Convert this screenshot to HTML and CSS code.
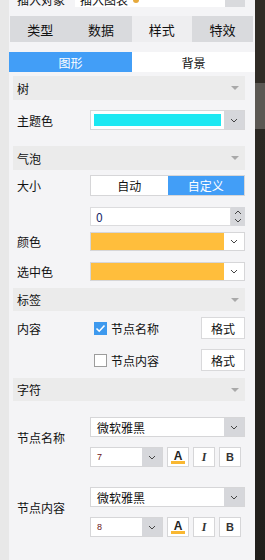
FILE: index.html
```html
<html>
<head>
  <meta http-equiv="Content-Type" content="text/html; charset=UTF-8"/>
  <title>样式</title>
  <link rel="stylesheet" href="styles.css">
</head>
<body>
<div class="page">
<div class="panel">

  <div class="top">
    <div class="top-row">
      <span class="top-label">插入对象</span>
      <div class="top-input"><span>插入图表</span><span class="top-icon"></span></div>
      <div class="top-btn"></div>
    </div>
  </div>

  <div class="tabs">
    <div class="tab">类型</div>
    <div class="tab">数据</div>
    <div class="tab active">样式</div>
    <div class="tab">特效</div>
  </div>

  <div class="subtabs">
    <div class="subtab on">图形</div>
    <div class="subtab">背景</div>
  </div>

  <div class="head h-tree">树<svg class="tri" width="8" height="5" viewBox="0 0 8 5"><path d="M0 0H8L4 4Z" fill="#a9a9a9"/></svg></div>
  <div class="row r-theme">
    <div class="label">主题色</div>
    <div class="pick">
      <div class="pick-box"><div class="swatch cyan"></div></div>
      <div class="drop gray"><svg class="chev" width="8" height="5" viewBox="0 0 8 5"><path d="M1 1L4 4L7 1" fill="none" stroke="#444"/></svg></div>
    </div>
  </div>

  <div class="head h-bubble">气泡<svg class="tri" width="8" height="5" viewBox="0 0 8 5"><path d="M0 0H8L4 4Z" fill="#a9a9a9"/></svg></div>
  <div class="row r-size">
    <div class="label">大小</div>
    <div class="seg">
      <div class="seg-item">自动</div>
      <div class="seg-item on">自定义</div>
    </div>
  </div>
  <div class="row r-num">
    <div class="label"></div>
    <div class="num">
      <div class="num-val">0</div>
      <div class="spin">
        <svg width="8" height="5" viewBox="0 0 8 5"><path d="M1 4L4 1L7 4" fill="none" stroke="#444"/></svg>
        <svg width="8" height="5" viewBox="0 0 8 5"><path d="M1 1L4 4L7 1" fill="none" stroke="#444"/></svg>
      </div>
    </div>
  </div>
  <div class="row r-color">
    <div class="label">颜色</div>
    <div class="pick">
      <div class="fill orange"></div>
      <div class="drop"><svg class="chev" width="8" height="5" viewBox="0 0 8 5"><path d="M1 1L4 4L7 1" fill="none" stroke="#444"/></svg></div>
    </div>
  </div>
  <div class="row r-sel">
    <div class="label">选中色</div>
    <div class="pick">
      <div class="fill orange"></div>
      <div class="drop"><svg class="chev" width="8" height="5" viewBox="0 0 8 5"><path d="M1 1L4 4L7 1" fill="none" stroke="#444"/></svg></div>
    </div>
  </div>

  <div class="head h-label">标签<svg class="tri" width="8" height="5" viewBox="0 0 8 5"><path d="M0 0H8L4 4Z" fill="#a9a9a9"/></svg></div>
  <div class="row r-c1">
    <div class="label">内容</div>
    <div class="check-line">
      <span class="box checked"><svg width="13" height="13" viewBox="0 0 13 13"><path d="M2.5 6.5L5.2 9.2L10.5 3.5" fill="none" stroke="#fff" stroke-width="1.6"/></svg></span>
      <span class="check-text">节点名称</span>
      <div class="btn">格式</div>
    </div>
  </div>
  <div class="row r-c2">
    <div class="label"></div>
    <div class="check-line">
      <span class="box"></span>
      <span class="check-text">节点内容</span>
      <div class="btn">格式</div>
    </div>
  </div>

  <div class="head h-font">字符<svg class="tri" width="8" height="5" viewBox="0 0 8 5"><path d="M0 0H8L4 4Z" fill="#a9a9a9"/></svg></div>

  <div class="font-group g1">
    <div class="label">节点名称</div>
    <div class="font-ctrl">
      <div class="select">
        <div class="select-val">微软雅黑</div>
        <div class="drop gray"><svg class="chev" width="8" height="5" viewBox="0 0 8 5"><path d="M1 1L4 4L7 1" fill="none" stroke="#444"/></svg></div>
      </div>
      <div class="tools">
        <div class="size">
          <div class="size-val">7</div>
          <div class="drop gray"><svg class="chev" width="8" height="5" viewBox="0 0 8 5"><path d="M1 1L4 4L7 1" fill="none" stroke="#444"/></svg></div>
        </div>
        <div class="tool"><span class="a">A</span><span class="bar"></span></div>
        <div class="tool"><span class="i">I</span></div>
        <div class="tool"><span class="b">B</span></div>
      </div>
    </div>
  </div>

  <div class="font-group g2">
    <div class="label">节点内容</div>
    <div class="font-ctrl">
      <div class="select">
        <div class="select-val">微软雅黑</div>
        <div class="drop gray"><svg class="chev" width="8" height="5" viewBox="0 0 8 5"><path d="M1 1L4 4L7 1" fill="none" stroke="#444"/></svg></div>
      </div>
      <div class="tools">
        <div class="size">
          <div class="size-val">8</div>
          <div class="drop gray"><svg class="chev" width="8" height="5" viewBox="0 0 8 5"><path d="M1 1L4 4L7 1" fill="none" stroke="#444"/></svg></div>
        </div>
        <div class="tool"><span class="a">A</span><span class="bar"></span></div>
        <div class="tool"><span class="i">I</span></div>
        <div class="tool"><span class="b">B</span></div>
      </div>
    </div>
  </div>

</div>
<div class="side"></div>
</div>
</body>
</html>
```

FILE: styles.css
```css
body {margin: 0; background: #e8e8e8; font: 12px "Noto Sans CJK SC", "Liberation Sans", sans-serif; color: #111}
div.page {display: flex; height: 560px; padding-left: 9px; overflow: hidden}
div.panel {width: 246px; background: #f4f4f6}
div.side {width: 10px; background: linear-gradient(#302c26 0, #302c26 83px, #5b5853 83px, #5b5853 129px, #2b2823 129px, #211f1c 560px)}

div.top {height: 7px; margin-bottom: 9px}
div.top-row {display: flex; align-items: flex-end; height: 7px}
span.top-label {width: 58px; padding-left: 8px; line-height: 14px}
div.top-input {display: flex; align-items: flex-end; width: 145px; height: 20px; padding-left: 5px; background: #fff; line-height: 14px}
span.top-icon {width: 6px; height: 6px; margin: 0 0 4px 5px; border-radius: 3px; background: #e6a93c}
div.top-btn {width: 20px; height: 20px; background: #d9dadd}

div.tabs {display: flex; width: 243px; height: 26px; margin-left: 1px}
div.tab {flex: 1; display: flex; align-items: center; justify-content: center; background: #d9dadd; font-size: 13px}
div.tab.active {background: #eeeef0}

div.subtabs {display: flex; height: 20px; margin-top: 10px}
div.subtab {flex: 1; display: flex; align-items: center; justify-content: center; background: #fff}
div.subtab.on {background: #429ef7; color: #fff}

div.head {display: flex; align-items: center; justify-content: space-between; height: 24px; margin: 0 10px 0 4px; padding: 0 6px 0 4px; background: #ebebeb}
svg.tri {margin-top: 1px}
div.h-tree {margin-top: 4px}
div.h-bubble {margin-top: 16px}
div.h-label {margin-top: 7px; height: 23px}
div.h-font {margin-top: 7px; height: 23px}

div.row {display: flex; align-items: center; margin-left: 4px}
div.label {width: 73px; padding-left: 4px}
div.r-theme {margin-top: 10px; height: 20px}
div.r-size {margin-top: 5px; height: 21px}
div.r-num {margin-top: 11px; height: 19px}
div.r-color {margin-top: 6px; height: 19px}
div.r-sel {margin-top: 11px; height: 19px}
div.r-c1 {margin-top: 6px; height: 22px}
div.r-c2 {margin-top: 10px; height: 22px}

div.pick {display: flex; width: 155px; height: 100%; box-sizing: border-box; border: 1px solid #d6d6d8; background: #fff}
div.pick-box {flex: 1; padding: 3px}
div.swatch {height: 100%}
div.cyan {background: #1de8f2}
div.fill {flex: 1}
div.orange {background: #ffbe3c}
div.drop {display: flex; align-items: center; justify-content: center; width: 20px; background: #fff}
div.drop.gray {background: #d6d7db}

div.seg {display: flex; width: 155px; height: 100%; box-sizing: border-box; border: 1px solid #d6d6d8}
div.seg-item {flex: 1; display: flex; align-items: center; justify-content: center; background: #fff}
div.seg-item.on {background: #429ef7; color: #fff}

div.num {display: flex; width: 155px; height: 100%}
div.num-val {flex: 1; display: flex; align-items: center; padding-left: 5px; box-sizing: border-box; border: 1px solid #dcdcde; background: #fff; color: #1a2a6a}
div.spin {display: flex; flex-direction: column; align-items: center; justify-content: center; gap: 3px; width: 14px; background: #d6d7db}

div.check-line {display: flex; align-items: center; width: 155px; height: 100%}
span.box {width: 13px; height: 13px; margin-left: 4px; box-sizing: border-box; border: 1px solid #9c9c9c; background: #fff}
span.box.checked {border: none; background: #3d99ee}
span.box svg {display: block}
span.check-text {flex: 1; padding-left: 4px}
div.btn {display: flex; align-items: center; justify-content: center; width: 44px; height: 100%; box-sizing: border-box; border: 1px solid #d9d9db; background: #fff}

div.font-group {display: flex; align-items: center; margin-left: 4px}
div.font-group div.label {padding-bottom: 9px}
div.g1 {margin-top: 16px}
div.g2 {margin-top: 20px}
div.font-ctrl {width: 155px}
div.select {display: flex; height: 20px; box-sizing: border-box; border: 1px solid #d6d6d8; background: #fff}
div.select-val {flex: 1; display: flex; align-items: center; padding-left: 6px}
div.tools {display: flex; gap: 4px; margin-top: 10px; height: 20px}
div.size {display: flex; width: 73px; box-sizing: border-box; border: 1px solid #d6d6d8; background: #fff}
div.size-val {flex: 1; display: flex; align-items: center; padding-left: 6px; font: 9px "Liberation Sans", sans-serif; color: #6a1420}
div.tool {position: relative; display: flex; align-items: center; justify-content: center; width: 22px; box-sizing: border-box; border: 1px solid #d6d6d8; background: #fff}
span.a {margin-top: -3px; font: bold 12px "Liberation Sans", sans-serif; color: #222}
span.bar {position: absolute; left: 3px; right: 3px; bottom: 2px; height: 3px; background: #f9b731}
span.i {font: italic bold 12px "Liberation Serif", serif; color: #333}
span.b {font: bold 11px "Liberation Sans", sans-serif; color: #333}
```
